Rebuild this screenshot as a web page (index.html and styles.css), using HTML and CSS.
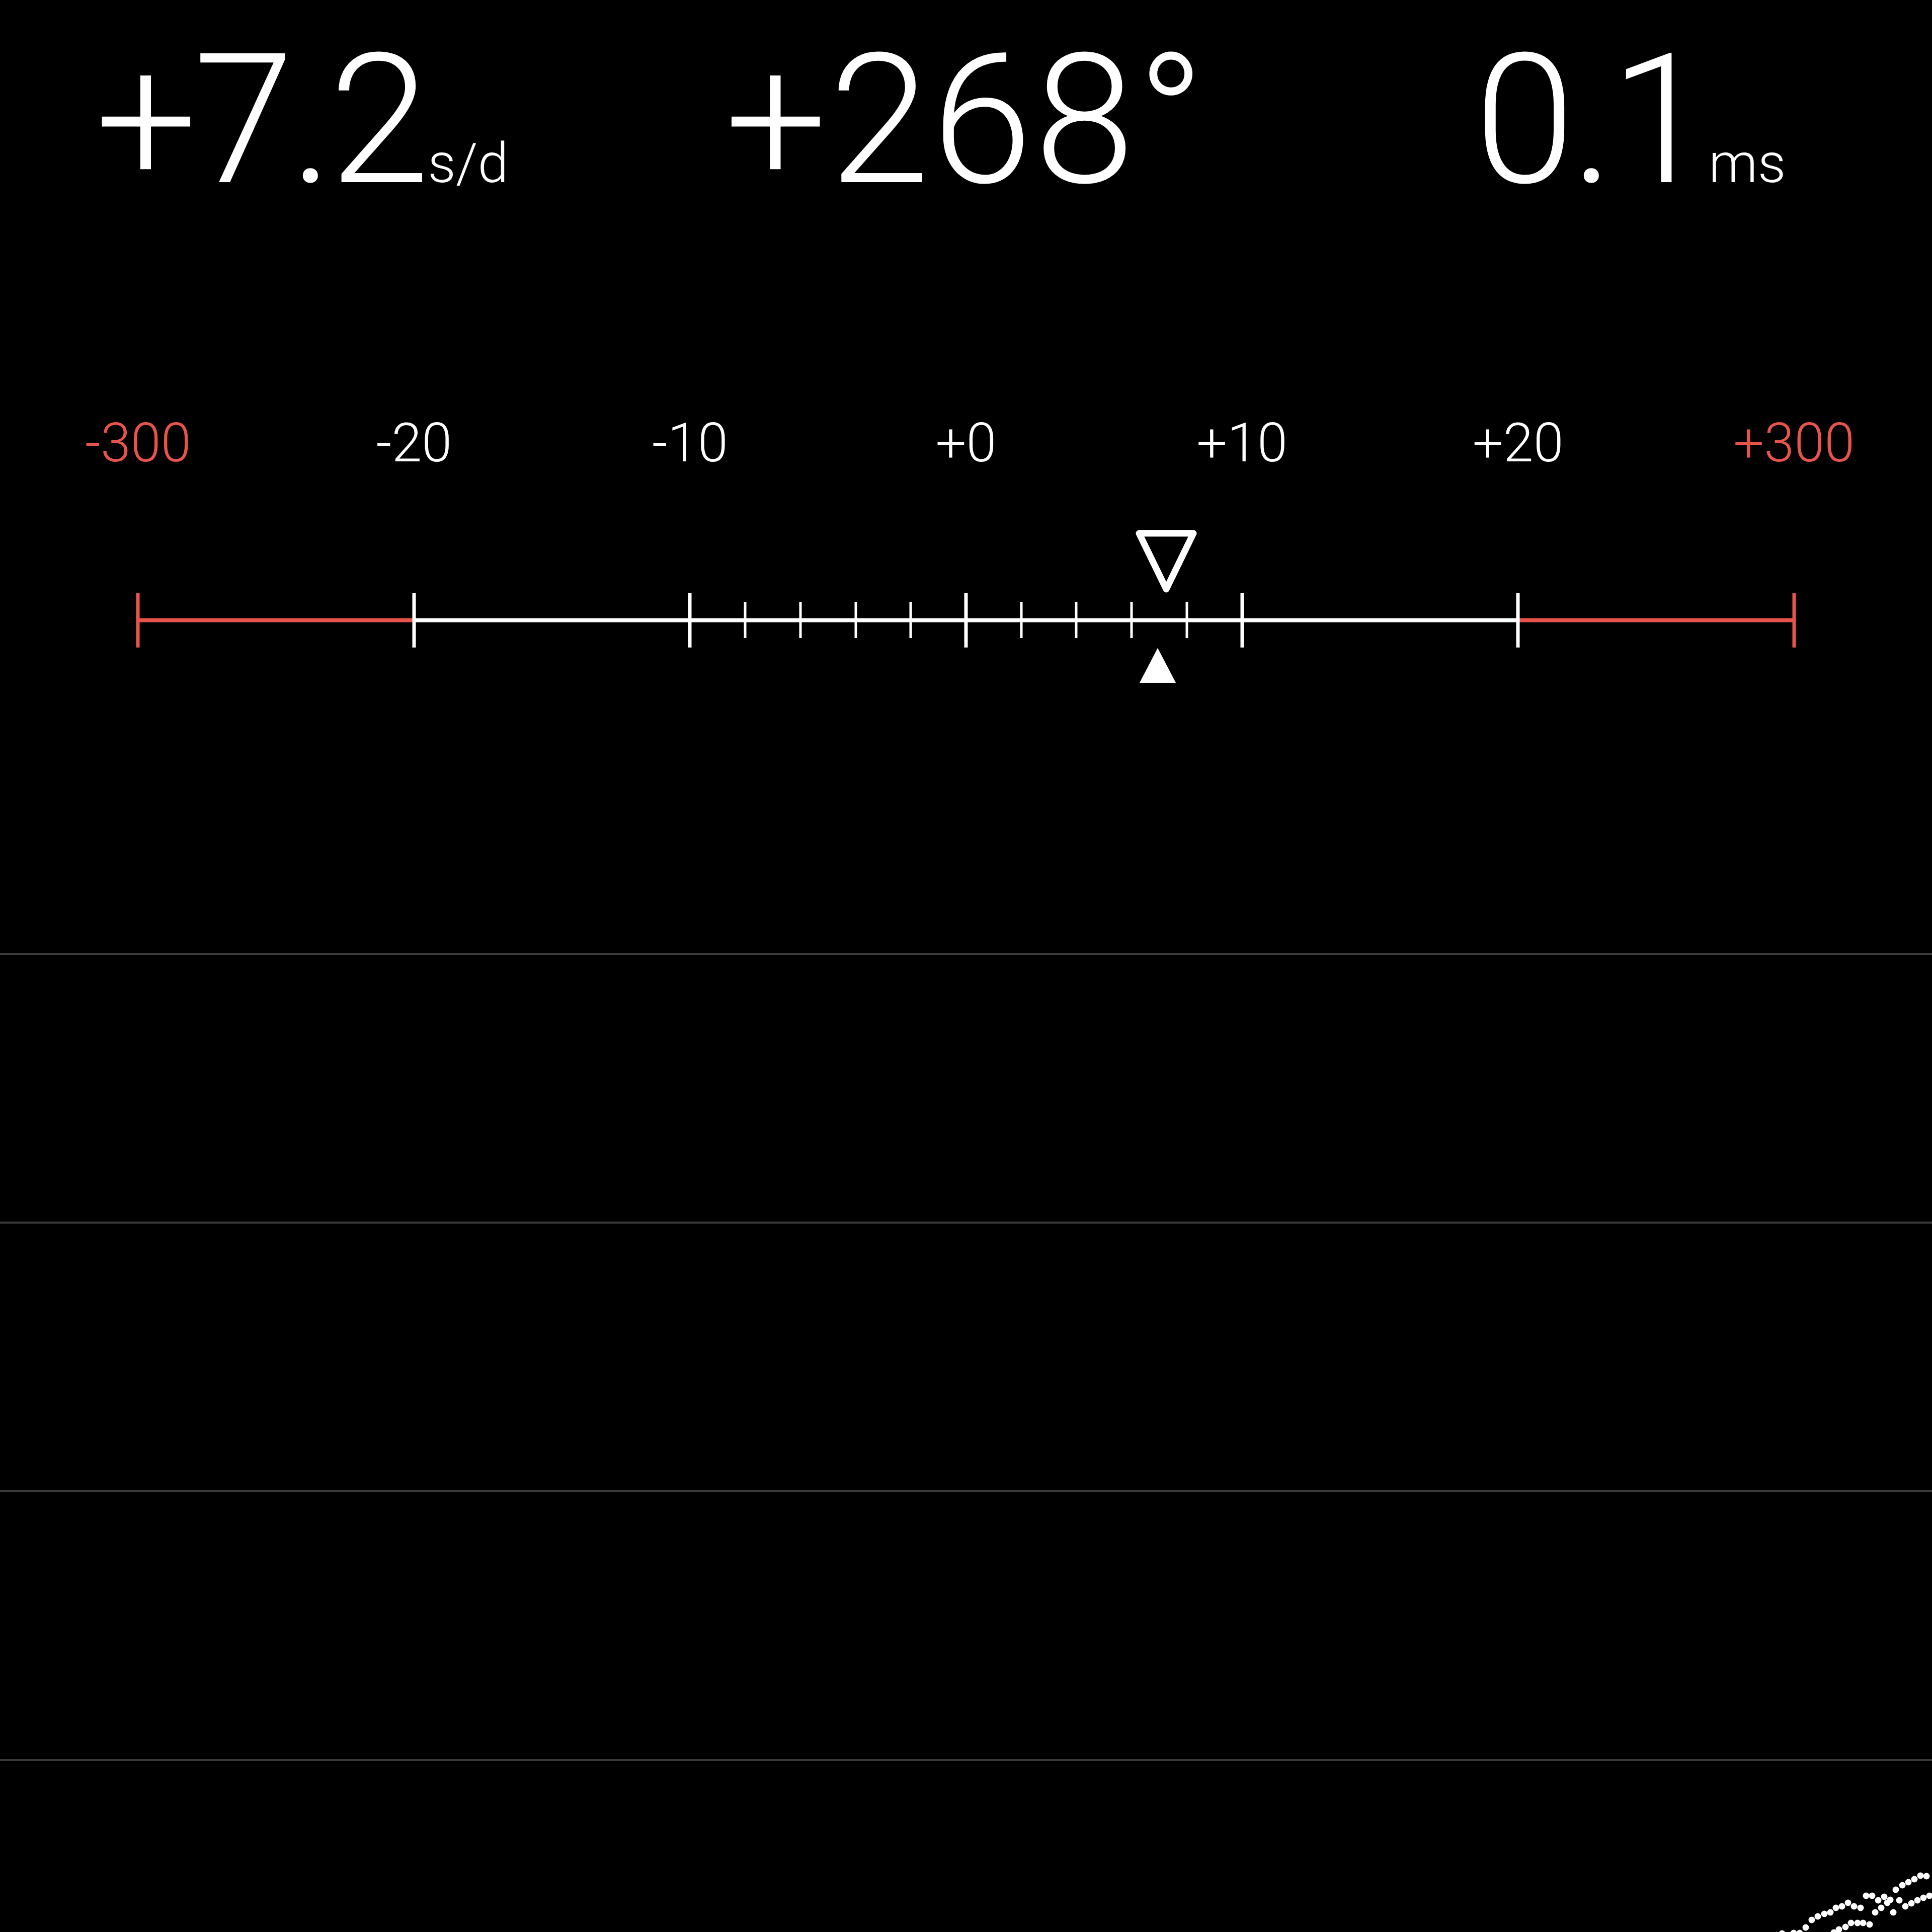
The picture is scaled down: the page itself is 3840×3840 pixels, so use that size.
FILE: index.html
```html
<!DOCTYPE html>
<html lang="en">
<head>
  <meta charset="UTF-8" />
  <title>Timegrapher</title>
  <link rel="stylesheet" href="styles.css">
</head>
<body>
  <div class="app">

    <!-- rate / amplitude / beat error -->
    <div class="readouts">
      <div class="readout tight">+7.2<span class="unit">s/d</span></div>
      <div class="readout wide">+268°</div>
      <div class="readout tight">0.1<span class="unit">ms</span></div>
    </div>

    <div class="labels">
      <span class="limit">-300</span>
      <span>-20</span>
      <span>-10</span>
      <span>+0</span>
      <span>+10</span>
      <span>+20</span>
      <span class="limit">+300</span>
    </div>

    <svg class="scale" width="3840" height="340" viewBox="0 1040 3840 340">
      <line x1="274" y1="1233" x2="823" y2="1233" stroke="#e9544a" stroke-width="8"/>
      <line x1="823" y1="1233" x2="3017" y2="1233" stroke="#fff" stroke-width="8"/>
      <line x1="3017" y1="1233" x2="3566" y2="1233" stroke="#e9544a" stroke-width="8"/>

      <!-- major ticks -->
      <g stroke-width="7">
        <line x1="274" y1="1179" x2="274" y2="1287" stroke="#e9544a"/>
        <line x1="823" y1="1179" x2="823" y2="1287" stroke="#fff"/>
        <line x1="1371" y1="1179" x2="1371" y2="1287" stroke="#fff"/>
        <line x1="1920" y1="1179" x2="1920" y2="1287" stroke="#fff"/>
        <line x1="2469" y1="1179" x2="2469" y2="1287" stroke="#fff"/>
        <line x1="3017" y1="1179" x2="3017" y2="1287" stroke="#fff"/>
        <line x1="3566" y1="1179" x2="3566" y2="1287" stroke="#e9544a"/>
      </g>

      <!-- minor ticks, every 2 s/d -->
      <g stroke="#fff" stroke-width="5">
        <line x1="1481" y1="1197" x2="1481" y2="1268"/>
        <line x1="1591" y1="1197" x2="1591" y2="1268"/>
        <line x1="1701" y1="1197" x2="1701" y2="1268"/>
        <line x1="1810" y1="1197" x2="1810" y2="1268"/>
        <line x1="2030" y1="1197" x2="2030" y2="1268"/>
        <line x1="2139" y1="1197" x2="2139" y2="1268"/>
        <line x1="2249" y1="1197" x2="2249" y2="1268"/>
        <line x1="2359" y1="1197" x2="2359" y2="1268"/>
      </g>

      <!-- current rate / average -->
      <polygon points="2264,1060 2372,1060 2318,1171" fill="none" stroke="#fff" stroke-width="13" stroke-linejoin="round"/>
      <polygon points="2301,1288 2265,1357 2337,1357" fill="#fff"/>
    </svg>

    <div class="chart">
      <div class="gridline"></div>
      <div class="gridline"></div>
      <div class="gridline"></div>
      <div class="gridline"></div>

      <svg class="trace" viewBox="0 1380 3840 2460">
        <g fill="#fff">
          <circle cx="3542" cy="3843" r="6.5"/>
          <circle cx="3565" cy="3842" r="6.5"/>
          <circle cx="3577" cy="3842" r="6.5"/>
          <circle cx="3589" cy="3831" r="6.5"/>
          <circle cx="3601" cy="3816" r="6.5"/>
          <circle cx="3613" cy="3809" r="6.5"/>
          <circle cx="3626" cy="3804" r="6.5"/>
          <circle cx="3638" cy="3801" r="6.5"/>
          <circle cx="3649" cy="3792" r="6.5"/>
          <circle cx="3661" cy="3789" r="6.5"/>
          <circle cx="3673" cy="3782" r="6.5"/>
          <circle cx="3685" cy="3789" r="6.5"/>
          <circle cx="3698" cy="3792" r="6.5"/>
          <circle cx="3709" cy="3768" r="6.5"/>
          <circle cx="3721" cy="3768" r="6.5"/>
          <circle cx="3733" cy="3777" r="6.5"/>
          <circle cx="3745" cy="3770" r="6.5"/>
          <circle cx="3757" cy="3776" r="6.5"/>
          <circle cx="3751" cy="3782" r="6.5"/>
          <circle cx="3739" cy="3792" r="6.5"/>
          <circle cx="3727" cy="3801" r="6.5"/>
          <circle cx="3763" cy="3801" r="6.5"/>
          <circle cx="3775" cy="3777" r="6.5"/>
          <circle cx="3768" cy="3756" r="6.5"/>
          <circle cx="3781" cy="3747" r="6.5"/>
          <circle cx="3793" cy="3741" r="6.5"/>
          <circle cx="3805" cy="3735" r="6.5"/>
          <circle cx="3817" cy="3728" r="6.5"/>
          <circle cx="3829" cy="3729" r="6.5"/>
          <circle cx="3787" cy="3789" r="6.5"/>
          <circle cx="3799" cy="3783" r="6.5"/>
          <circle cx="3811" cy="3777" r="6.5"/>
          <circle cx="3823" cy="3772" r="6.5"/>
          <circle cx="3835" cy="3768" r="6.5"/>
          <circle cx="3645" cy="3841" r="6.5"/>
          <circle cx="3655" cy="3835" r="6.5"/>
          <circle cx="3668" cy="3830" r="6.5"/>
          <circle cx="3679" cy="3822" r="6.5"/>
          <circle cx="3692" cy="3822" r="6.5"/>
          <circle cx="3703" cy="3822" r="6.5"/>
          <circle cx="3716" cy="3825" r="6.5"/>
        </g>
      </svg>
    </div>

  </div>
</body>
</html>
```

FILE: styles.css
```css
body {
  margin: 0;
  background: #000;
  color: #fff;
  font-family: Roboto, "Liberation Sans", sans-serif;
  font-weight: 300;
}
.app {
  width: 3840px;
  height: 3840px;
  overflow: hidden;
  display: flex;
  flex-direction: column;
}
.readouts {
  flex-shrink: 0;
  display: grid;
  grid-template-columns: 1200px 1440px 1200px;
  padding-top: 59px;
  height: 360px;
  font-size: 360px;
  line-height: 360px;
}
.readout {
  text-align: center;
  white-space: nowrap;
}
.readout.tight {
  letter-spacing: -8px;
}
.readout.wide {
  letter-spacing: 4px;
}
.unit {
  font-size: 110px;
  line-height: 1;
  letter-spacing: 0;
  margin-left: 4px;
}
.labels {
  flex-shrink: 0;
  display: grid;
  grid-template-columns: repeat(7, 1fr);
  margin-top: 407px;
  height: 108px;
  font-size: 108px;
  line-height: 108px;
  text-align: center;
}
.limit {
  color: #e9544a;
}
.scale {
  flex-shrink: 0;
  display: block;
  margin-top: 106px;
}
.chart {
  position: relative;
  flex: 1;
  min-height: 0;
  overflow: hidden;
  padding-top: 514px;
}
.gridline {
  height: 534px;
  box-sizing: border-box;
  border-top: 4px solid #3a3a3a;
}
.trace {
  position: absolute;
  top: 0;
  left: 0;
  width: 100%;
  height: 100%;
}
```
